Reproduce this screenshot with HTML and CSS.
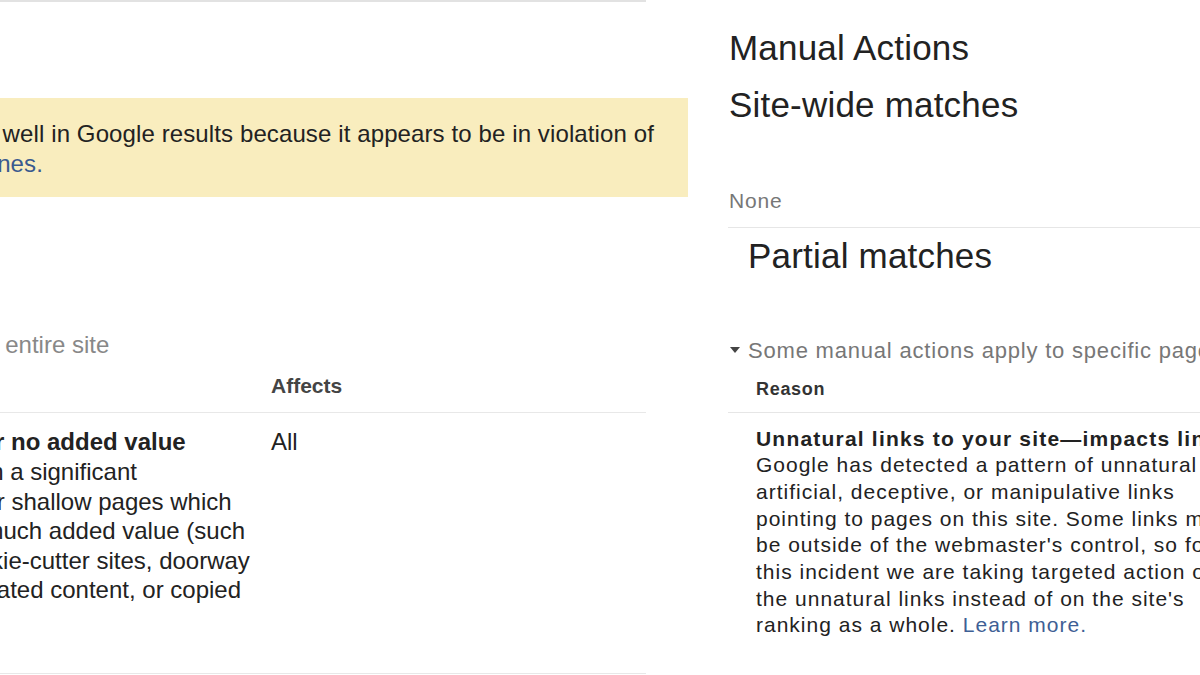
FILE: index.html
```html
<!DOCTYPE html>
<html lang="en">
<head>
<meta charset="utf-8">
<title>Manual Actions</title>
<link rel="stylesheet" href="styles.css">
</head>
<body>
<div class="page">
  <section class="left">
    <div class="topline"></div>
    <div class="notice">
      <p class="notice-text">This site may not perform as well in Google results because it appears to be in violation of<br><a href="#">Google's Webmaster Guidelines.</a></p>
    </div>
    <p class="scope">Some manual actions apply to the entire site</p>
    <div class="ltable">
      <div class="lhead"><span>Reason</span><span>Affects</span></div>
      <div class="lrow">
        <div class="lcell"><strong class="nudge-bold">Thin content with little or no added value</strong><br>This site appears to contain a significant<br>percentage of low-quality or shallow pages which<br>do not provide users with much added value (such<br><span class="nudge">as thin affiliate pages, cookie-cutter sites, doorway</span><br>pages, automatically generated content, or copied<br>content). <a href="#">Learn more.</a></div>
        <div class="lcell">All</div>
      </div>
    </div>
  </section>
  <section class="right">
    <h1 class="title">Manual Actions</h1>
    <h2 class="title sub">Site-wide matches</h2>
    <p class="none">None</p>
    <h2 class="title partial">Partial matches</h2>
    <p class="toggle"><span class="caret"></span>Some manual actions apply to specific pages, sections, or links</p>
    <div class="rtable">
      <div class="rhead">Reason</div>
      <div class="rbody"><strong class="rbold">Unnatural links to your site—impacts links</strong><br>Google has detected a pattern of unnatural<br>artificial, deceptive, or manipulative links<br>pointing to pages on this site. Some links may<br>be outside of the webmaster's control, so for<br>this incident we are taking targeted action on<br>the unnatural links instead of on the site's<br>ranking as a whole. <a href="#">Learn more.</a></div>
    </div>
  </section>
</div>
</body>
</html>
```

FILE: styles.css
```css
html, body {
  margin: 0;
  padding: 0;
}
body {
  width: 1200px;
  height: 675px;
  overflow: hidden;
  background: #fff;
  color: #222;
  font-family: "Liberation Sans", Arial, sans-serif;
}
a {
  color: #3a5a8f;
  text-decoration: none;
}
.page {
  display: flex;
  height: 675px;
}

/* left screenshot */
.left {
  width: 700px;
  flex: none;
  overflow: hidden;
}
.topline {
  width: 646px;
  height: 2px;
  background: #e2e2e2;
}
.notice {
  margin-top: 96px;
  width: 688px;
  height: 99px;
  box-sizing: border-box;
  padding-top: 21px;
  background: #f9edbe;
  overflow: hidden;
}
.notice-text {
  margin: 0 0 0 -310px;
  font-size: 24px;
  line-height: 30px;
  letter-spacing: 0.11px;
  white-space: nowrap;
}
.scope {
  margin: 133px 0 0 -363px;
  font-size: 24px;
  line-height: 30px;
  color: #888;
  white-space: nowrap;
}
.ltable {
  margin-left: -290px;
  width: 936px;
}
.lhead {
  display: grid;
  grid-template-columns: 561px 1fr;
  padding: 14px 0;
  border-bottom: 1px solid #e8e8e8;
  font-size: 21px;
  line-height: 24px;
  font-weight: bold;
  color: #444;
}
.lrow {
  display: grid;
  grid-template-columns: 561px 1fr;
  padding: 14.4px 0 38.6px;
  border-bottom: 1px solid #e8e8e8;
  font-size: 24px;
  line-height: 29.6px;
  white-space: nowrap;
}
.nudge-bold {
  display: inline-block;
  margin-left: 9px;
}
.nudge {
  display: inline-block;
  margin-left: 4px;
}

/* right screenshot */
.right {
  flex: 1;
  min-width: 0;
  overflow: hidden;
  padding-left: 28px;
}
.title {
  margin: 28px 0 0 1px;
  font-size: 35px;
  line-height: 40px;
  font-weight: normal;
  letter-spacing: 0.2px;
  white-space: nowrap;
}
.sub {
  margin-top: 17px;
}
.none {
  margin: 64px 0 0;
  padding: 0 0 14px 1px;
  border-bottom: 1px solid #e6e6e6;
  font-size: 21px;
  line-height: 24px;
  color: #777;
  letter-spacing: 0.8px;
}
.partial {
  margin: 8px 0 0 20px;
}
.toggle {
  margin: 62px 0 0 1px;
  font-size: 22px;
  line-height: 26px;
  color: #777;
  letter-spacing: 0.8px;
  white-space: nowrap;
}
.caret {
  display: inline-block;
  width: 0;
  height: 0;
  margin: 0 8px 0 1px;
  border-left: 5px solid transparent;
  border-right: 5px solid transparent;
  border-top: 6px solid #444;
  vertical-align: 5px;
}
.rhead {
  padding: 13.7px 0 12px 28px;
  border-bottom: 1px solid #e6e6e6;
  font-size: 18px;
  line-height: 22px;
  font-weight: bold;
  color: #333;
  letter-spacing: 0.7px;
}
.rbody {
  padding: 12.85px 0 0 28px;
  font-size: 21px;
  line-height: 26.7px;
  letter-spacing: 1px;
  white-space: nowrap;
}
.rbold {
  letter-spacing: 1.2px;
}
.rbody a {
  color: #3e5f95;
}
```
